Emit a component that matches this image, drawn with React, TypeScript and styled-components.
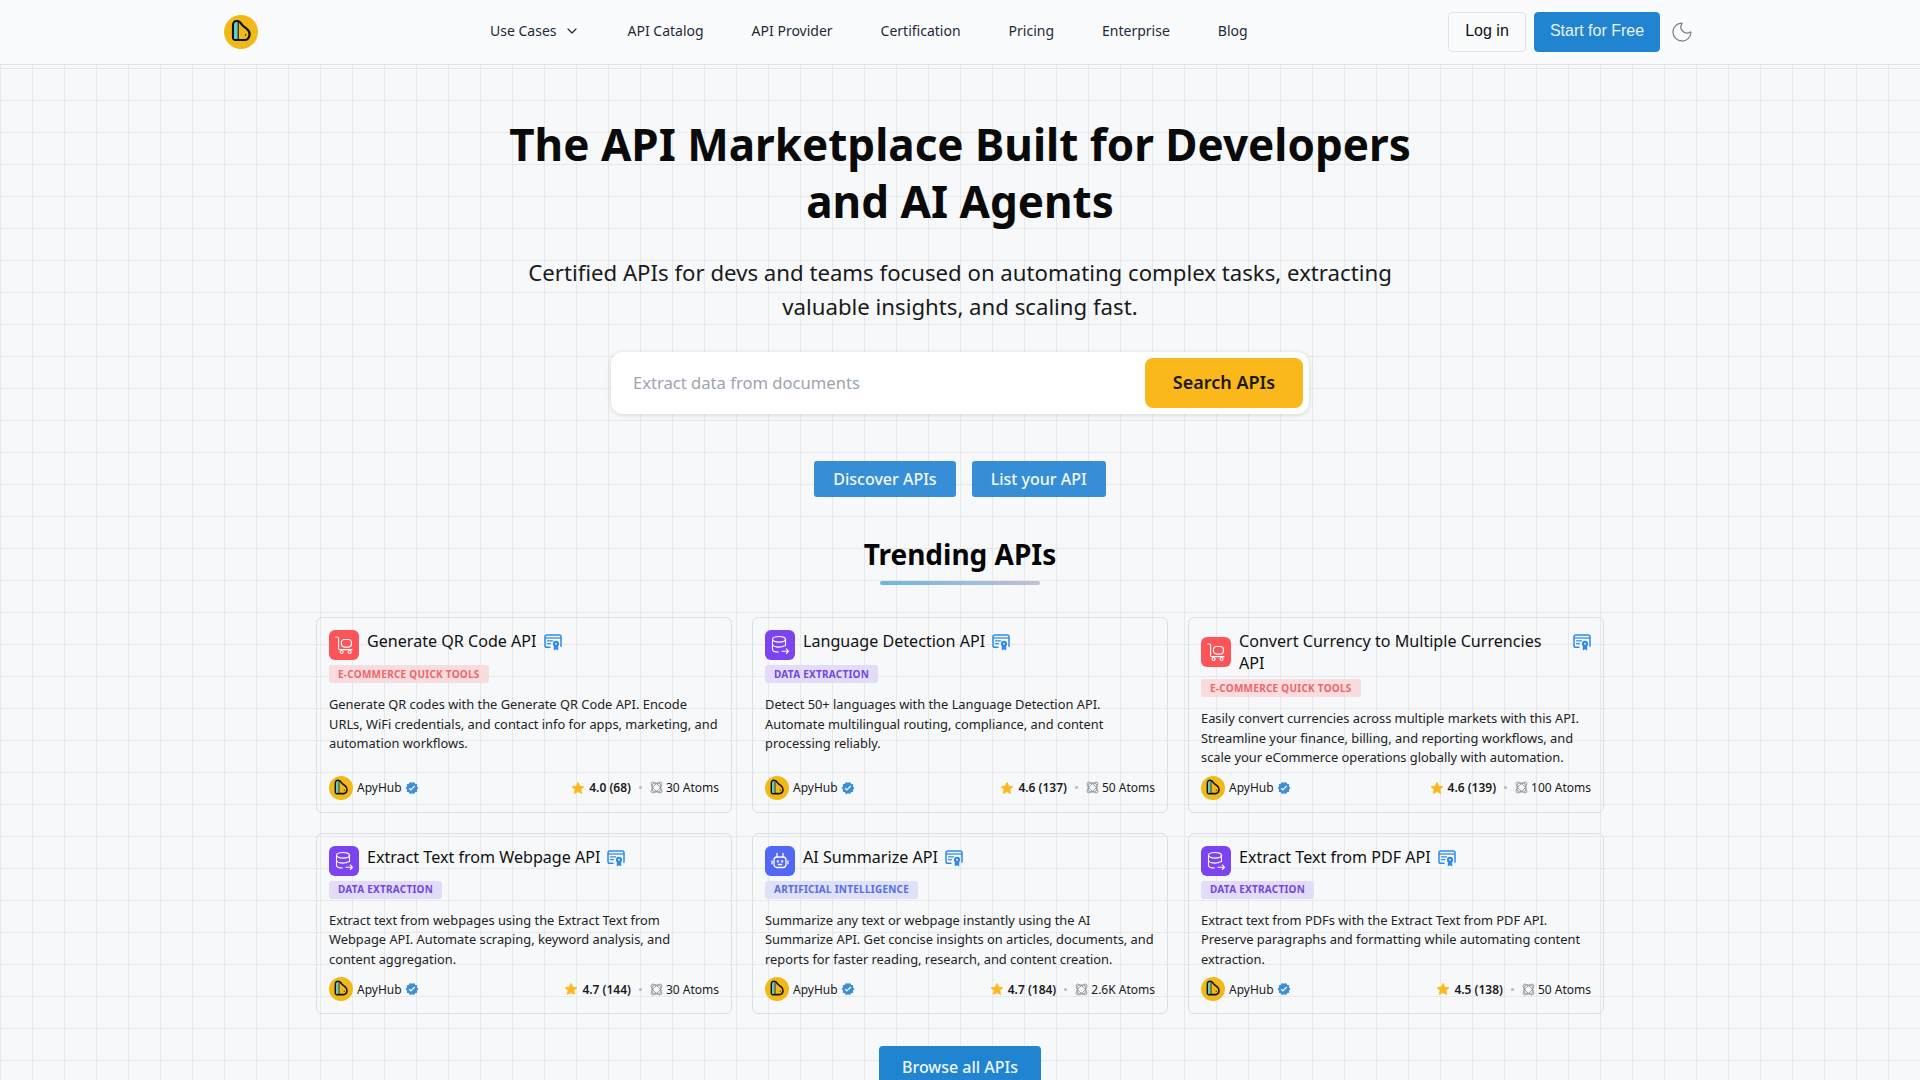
import React from 'react';
import styled, { createGlobalStyle } from 'styled-components';
import { ChevronDown, Moon } from 'lucide-react';
import { MdVerified } from 'react-icons/md';

const GlobalStyle = createGlobalStyle`
  html, body {
    margin: 0;
    padding: 0;
    height: 100%;
    overflow: hidden;
  }
  body {
    font-family: "Noto Sans", sans-serif;
    color: #111827;
  }
  * {
    box-sizing: border-box;
  }
`;

const Page = styled.div`
  height: 100vh;
  overflow: hidden;
  background-color: #f6f8fa;
  background-image: linear-gradient(to right, #e6e8ec 1px, transparent 1px),
    linear-gradient(to bottom, #e6e8ec 1px, transparent 1px);
  background-size: 32px 32px;
  background-position: 0 4px;
`;

const NavBar = styled.header`
  height: 65px;
  padding: 0 226px 0 224px;
  display: flex;
  align-items: center;
  background: #f9fbfd;
  border-bottom: 1px solid #dfe3ea;
`;

const NavLinks = styled.nav`
  margin-left: 232px;
  padding-bottom: 3px;
  display: flex;
  align-items: center;
  gap: 48px;
`;

const NavLink = styled.a`
  display: flex;
  align-items: center;
  gap: 7px;
  font-size: 14px;
  font-weight: 400;
  color: #1f2937;
  white-space: nowrap;
`;

const NavActions = styled.div`
  margin-left: auto;
  display: flex;
  align-items: center;
  gap: 8px;
  color: #7b8088;
`;

const NavButton = styled.button<{ $primary?: boolean }>`
  height: 40px;
  width: ${p => (p.$primary ? '126px' : '78px')};
  padding: 0 0 2px;
  font-family: "Liberation Sans", Arial, sans-serif;
  font-size: 16px;
  border-radius: 4px;
  border: 1px solid ${p => (p.$primary ? '#2084d0' : '#e0e4ea')};
  background: ${p => (p.$primary ? '#2084d0' : '#fafbfd')};
  color: ${p => (p.$primary ? '#e8f3fb' : '#111')};
`;

const ThemeToggle = styled(Moon)`
  margin-left: 2px;
`;

const Hero = styled.section`
  display: flex;
  flex-direction: column;
  align-items: center;
  padding-top: 51px;
`;

const Headline = styled.h1`
  margin: 0;
  max-width: 960px;
  font-size: 44px;
  line-height: 57px;
  font-weight: 700;
  color: #0a0a0a;
  text-align: center;
`;

const Subtitle = styled.p`
  margin: 26px 0 0;
  width: 896px;
  font-size: 22.2px;
  line-height: 34px;
  color: #1a1a1a;
  text-align: center;
`;

const SearchBox = styled.form`
  margin-top: 28px;
  width: 698px;
  height: 62px;
  padding: 6px 6px 6px 22px;
  display: flex;
  align-items: center;
  background: #fff;
  border-radius: 12px;
  box-shadow: 0 1px 5px rgba(0, 0, 0, 0.14);
`;

const SearchInput = styled.input`
  flex: 1;
  min-width: 0;
  padding: 0 0 1px;
  border: none;
  outline: none;
  background: transparent;
  font-family: inherit;
  font-size: 16.6px;
  color: #111;

  &::placeholder {
    color: #9ca3af;
    opacity: 1;
  }
`;

const SearchButton = styled.button`
  width: 158px;
  height: 50px;
  padding: 0 0 2px;
  border: none;
  border-radius: 8px;
  background: #fbb81b;
  color: #1d1a12;
  font-family: inherit;
  font-size: 18px;
  font-weight: 600;
`;

const CtaRow = styled.div`
  margin-top: 47px;
  display: flex;
  gap: 16px;
`;

const CtaButton = styled.button`
  height: 36px;
  padding: 0 19px;
  border: none;
  border-radius: 3px;
  background: #368fd6;
  color: #f2f8fc;
  font-family: inherit;
  font-size: 16px;
  font-weight: 500;
`;

const SectionTitle = styled.h2`
  margin: 37px 0 0;
  font-size: 28px;
  line-height: 40px;
  font-weight: 700;
  color: #050505;
`;

const Underline = styled.div`
  margin-top: 7px;
  width: 160px;
  height: 4px;
  border-radius: 2px;
  background: linear-gradient(to right, #6db6df, #c5bfd2);
`;

const CardGrid = styled.div`
  margin-top: 32px;
  width: 1288px;
  display: grid;
  grid-template-columns: repeat(3, 1fr);
  gap: 20px;
`;

const Card = styled.article`
  padding: 12px;
  display: flex;
  flex-direction: column;
  border: 1px solid #dcdfe4;
  border-radius: 6px;
`;

const CardHeader = styled.div`
  display: flex;
  align-items: center;
  gap: 8px;
`;

const CategoryIcon = styled.div<{ $bg: string }>`
  flex: none;
  width: 30px;
  height: 30px;
  display: flex;
  align-items: center;
  justify-content: center;
  border-radius: 6px;
  background: ${p => p.$bg};
  color: #fff;
`;

const TitleRow = styled.div`
  align-self: flex-start;
  display: flex;
  align-items: flex-start;
  gap: 7px;
`;

const CardTitle = styled.h3`
  margin: 0;
  font-size: 16.1px;
  line-height: 22px;
  font-weight: 450;
  color: #111;
`;

const CertIcon = styled.svg`
  flex: none;
  margin-top: 4px;
`;

const Badge = styled.span<{ $bg: string; $fg: string }>`
  margin-top: 5px;
  align-self: flex-start;
  height: 18px;
  padding: 0 9px 1px;
  display: flex;
  align-items: center;
  border-radius: 3px;
  background: ${p => p.$bg};
  color: ${p => p.$fg};
  font-size: 10px;
  font-weight: 700;
  letter-spacing: 0.25px;
  white-space: nowrap;
`;

const Description = styled.p`
  margin: 12px 0 8px;
  font-size: 12.85px;
  line-height: 19.5px;
  color: #222;
`;

const CardFooter = styled.div`
  margin-top: auto;
  height: 24px;
  display: flex;
  align-items: center;
  font-size: 12px;
  color: #1a1a1a;
`;

const Publisher = styled.span`
  margin-left: 4px;
  margin-right: 3px;
`;

const Stats = styled.div`
  margin-left: auto;
  display: flex;
  align-items: center;
`;

const Rating = styled.span`
  margin-left: 4px;
  font-weight: 600;
`;

const Dot = styled.span`
  width: 3px;
  height: 3px;
  margin: 0 8px;
  border-radius: 50%;
  background: #b4b9c0;
`;

const Atoms = styled.span`
  margin-left: 3px;
`;

const BrowseButton = styled.button`
  margin-top: 32px;
  flex: none;
  width: 162px;
  height: 42px;
  border: none;
  border-radius: 4px;
  background: #2084d0;
  color: #eef6fc;
  font-family: inherit;
  font-size: 16px;
  font-weight: 500;
`;

const Logo = ({ size }: { size: number }) => (
  <svg width={size} height={size} viewBox="0 0 34 34" style={{ flex: 'none' }}>
    <circle cx="17" cy="17" r="17" fill="#f0b917" />
    <path
      d="M9 22.5V10.5C9 7.6 10.8 6 13 6C15.4 6 16.6 7.4 17.6 9.3C18.6 11.2 20.6 11.9 22.6 13.6C24.8 15.4 26 17.3 25.6 19.8C25.1 22.8 23 25 20.5 25H11.5C10 25 9 24 9 22.5Z"
      fill="#f0b917"
      stroke="#111"
      strokeWidth="2.2"
      strokeLinejoin="round"
    />
    <path d="M10.1 23.9V10.5C10.1 8.4 11.2 7.1 13.8 7.1V23.9Z" fill="#5ccfd6" />
    <path d="M14.2 6.4V24.5" stroke="#111" strokeWidth="1.1" />
    <circle cx="21.6" cy="20" r="0.8" fill="#111" />
  </svg>
);

const CartIcon = () => (
  <svg width="20" height="20" viewBox="0 0 20 20" fill="none" stroke="currentColor" strokeWidth="1.1" strokeLinecap="round" strokeLinejoin="round">
    <path d="M1.5 2H3.5C4.2 2 4.6 2.5 4.6 3.2V13.5C4.6 14.2 5 14.6 5.7 14.6H18" />
    <rect x="7.4" y="4.5" width="10" height="7.6" rx="3" />
    <circle cx="7.6" cy="17" r="1.5" />
    <circle cx="15.6" cy="17" r="1.5" />
  </svg>
);

const DatabaseIcon = () => (
  <svg width="20" height="20" viewBox="0 0 20 20" fill="none" stroke="currentColor" strokeWidth="1.1" strokeLinecap="round" strokeLinejoin="round">
    <ellipse cx="9" cy="4.3" rx="6.5" ry="2.8" />
    <path d="M2.5 4.3V14.2C2.5 15.7 5 17 8.4 17" />
    <path d="M15.5 4.3V10.6" />
    <path d="M2.5 9.3C2.5 10.8 5.4 12.1 9 12.1C11.2 12.1 13.2 11.6 14.4 10.8" />
    <path d="M12 16.3H18.5M16.3 14L18.5 16.3L16.3 18.5" />
  </svg>
);

const RobotIcon = () => (
  <svg width="20" height="20" viewBox="0 0 20 20" fill="none" stroke="currentColor" strokeWidth="1.3" strokeLinecap="round" strokeLinejoin="round">
    <rect x="4" y="6" width="12" height="10.5" rx="3" />
    <path d="M7 2.5V6M13 2.5V6M2 10V12.8M18 10V12.8M8.4 13.5H11.6" />
    <circle cx="7.8" cy="10.5" r="0.5" />
    <circle cx="12.2" cy="10.5" r="0.5" />
  </svg>
);

const CertificateIcon = () => (
  <CertIcon width="18" height="17" viewBox="0 0 18 17" fill="none">
    <path d="M6.5 13.2H2.8C1.8 13.2 1 12.4 1 11.4V2.8C1 1.8 1.8 1 2.8 1H15.2C16.2 1 17 1.8 17 2.8V11.4C17 11.9 16.8 12.3 16.5 12.6" stroke="#2f8bea" strokeWidth="1.5" />
    <path d="M1 4H17" stroke="#2f8bea" strokeWidth="1.3" />
    <path d="M3.5 6.8H8.5M3.5 9.6H6.5" stroke="#2f8bea" strokeWidth="1.3" strokeLinecap="round" />
    <circle cx="12" cy="9.8" r="3.1" fill="#2f8bea" />
    <path d="M9.8 11.5V16.5L12 15.2L14.2 16.5V11.5Z" fill="#2f8bea" />
    <circle cx="12" cy="9.8" r="1" fill="#dbeafb" />
  </CertIcon>
);

const StarIcon = () => (
  <svg width="14" height="14" viewBox="0 0 24 24" style={{ flex: 'none' }}>
    <path d="M12 2.5L15 8.9L22 9.8L16.9 14.6L18.2 21.5L12 18.1L5.8 21.5L7.1 14.6L2 9.8L9 8.9Z" fill="#fbb81b" stroke="#fbb81b" strokeWidth="1.5" strokeLinejoin="round" />
  </svg>
);

const AtomIcon = () => (
  <svg width="13" height="13" viewBox="0 0 13 13" fill="none" stroke="#8f949b" strokeWidth="0.9" style={{ flex: 'none' }}>
    <ellipse cx="6.5" cy="6.5" rx="7" ry="3" transform="rotate(45 6.5 6.5)" />
    <ellipse cx="6.5" cy="6.5" rx="7" ry="3" transform="rotate(-45 6.5 6.5)" />
    <rect x="2.2" y="2.2" width="8.6" height="8.6" rx="2.5" />
  </svg>
);

type Category = { label: string; icon: React.ReactNode; solid: string; tint: string; text: string };

const ecommerce: Category = { label: 'E-COMMERCE QUICK TOOLS', icon: <CartIcon />, solid: '#fb5559', tint: '#f9dcde', text: '#ee666b' };
const extraction: Category = { label: 'DATA EXTRACTION', icon: <DatabaseIcon />, solid: '#7c43f0', tint: '#e3dcf9', text: '#7048dc' };
const ai: Category = { label: 'ARTIFICIAL INTELLIGENCE', icon: <RobotIcon />, solid: '#5367f5', tint: '#dde1f9', text: '#5a6ce0' };

const apis = [
  { title: 'Generate QR Code API', category: ecommerce, text: 'Generate QR codes with the Generate QR Code API. Encode URLs, WiFi credentials, and contact info for apps, marketing, and automation workflows.', rating: '4.0 (68)', atoms: '30 Atoms' },
  { title: 'Language Detection API', category: extraction, text: 'Detect 50+ languages with the Language Detection API. Automate multilingual routing, compliance, and content processing reliably.', rating: '4.6 (137)', atoms: '50 Atoms' },
  { title: 'Convert Currency to Multiple Currencies API', category: ecommerce, text: 'Easily convert currencies across multiple markets with this API. Streamline your finance, billing, and reporting workflows, and scale your eCommerce operations globally with automation.', rating: '4.6 (139)', atoms: '100 Atoms' },
  { title: 'Extract Text from Webpage API', category: extraction, text: 'Extract text from webpages using the Extract Text from Webpage API. Automate scraping, keyword analysis, and content aggregation.', rating: '4.7 (144)', atoms: '30 Atoms' },
  { title: 'AI Summarize API', category: ai, text: 'Summarize any text or webpage instantly using the AI Summarize API. Get concise insights on articles, documents, and reports for faster reading, research, and content creation.', rating: '4.7 (184)', atoms: '2.6K Atoms' },
  { title: 'Extract Text from PDF API', category: extraction, text: 'Extract text from PDFs with the Extract Text from PDF API. Preserve paragraphs and formatting while automating content extraction.', rating: '4.5 (138)', atoms: '50 Atoms' },
];

const links = ['API Catalog', 'API Provider', 'Certification', 'Pricing', 'Enterprise', 'Blog'];

export default function App() {
  return (
    <Page>
      <GlobalStyle />
      <NavBar>
        <Logo size={34} />
        <NavLinks>
          <NavLink>
            Use Cases <ChevronDown size={16} strokeWidth={1.75} />
          </NavLink>
          {links.map(link => (
            <NavLink key={link}>{link}</NavLink>
          ))}
        </NavLinks>
        <NavActions>
          <NavButton>Log in</NavButton>
          <NavButton $primary>Start for Free</NavButton>
          <ThemeToggle size={24} strokeWidth={1.25} />
        </NavActions>
      </NavBar>
      <Hero>
        <Headline>
          The API Marketplace Built for Developers
          <br />
          and AI Agents
        </Headline>
        <Subtitle>
          Certified APIs for devs and teams focused on automating complex tasks, extracting valuable insights, and scaling fast.
        </Subtitle>
        <SearchBox>
          <SearchInput placeholder="Extract data from documents" />
          <SearchButton type="button">Search APIs</SearchButton>
        </SearchBox>
        <CtaRow>
          <CtaButton>Discover APIs</CtaButton>
          <CtaButton>List your API</CtaButton>
        </CtaRow>
        <SectionTitle>Trending APIs</SectionTitle>
        <Underline />
        <CardGrid>
          {apis.map(api => (
            <Card key={api.title}>
              <CardHeader>
                <CategoryIcon $bg={api.category.solid}>{api.category.icon}</CategoryIcon>
                <TitleRow>
                  <CardTitle>{api.title}</CardTitle>
                  <CertificateIcon />
                </TitleRow>
              </CardHeader>
              <Badge $bg={api.category.tint} $fg={api.category.text}>
                {api.category.label}
              </Badge>
              <Description>{api.text}</Description>
              <CardFooter>
                <Logo size={24} />
                <Publisher>ApyHub</Publisher>
                <MdVerified size={14} color="#3f8fd8" />
                <Stats>
                  <StarIcon />
                  <Rating>{api.rating}</Rating>
                  <Dot />
                  <AtomIcon />
                  <Atoms>{api.atoms}</Atoms>
                </Stats>
              </CardFooter>
            </Card>
          ))}
        </CardGrid>
        <BrowseButton>Browse all APIs</BrowseButton>
      </Hero>
    </Page>
  );
}
